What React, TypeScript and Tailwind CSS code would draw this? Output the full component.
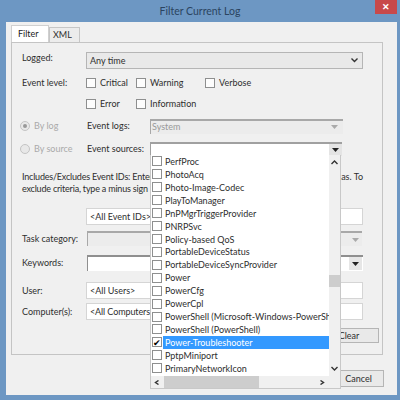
import React from "react";

const items = ["PerfProc","PhotoAcq","Photo-Image-Codec","PlayToManager","PnPMgrTriggerProvider","PNRPSvc","Policy-based QoS","PortableDeviceStatus","PortableDeviceSyncProvider","Power","PowerCfg","PowerCpl","PowerShell (Microsoft-Windows-PowerShell)","PowerShell (PowerShell)","Power-Troubleshooter","PptpMiniport","PrimaryNetworkIcon"];

function Check({ label, className = "" }: { label: string; className?: string }) {
  return (
    <div className={"flex items-center gap-[4px] " + className}>
      <span className="w-[10px] h-[10px] border border-[#8e8f8f] bg-[#fdfdfd] shrink-0" />
      <span>{label}</span>
    </div>
  );
}

function Arrow({ color = "#222" }: { color?: string }) {
  return (
    <svg width="7" height="4" viewBox="0 0 7 4"><path d="M0 0H7L3.5 4Z" fill={color} /></svg>
  );
}

function Chev({ d }: { d: string }) {
  return (
    <svg width="7" height="5" viewBox="0 0 7 5"><path d={d} fill="none" stroke="#333" strokeWidth="1.4" /></svg>
  );
}

function Field({ text, className = "" }: { text?: string; className?: string }) {
  return (
    <div className={"flex items-center bg-white border border-[#d5d5d5] pl-[3px] whitespace-nowrap " + className}>{text}</div>
  );
}

export default function App() {
  return (
    <div className="relative w-[400px] h-[400px] overflow-hidden bg-[#6d97c3] text-[#2e2e2e] text-[9px] leading-[12px] pt-[22px] pl-[6px] pr-[3px] pb-[5px]" style={{ fontFamily: 'Lato, sans-serif' }}>
      <div className="absolute left-0 right-0 top-[3px] text-center text-[10.5px] leading-[16px] text-[#2b4460]">Filter Current Log</div>
      <div className="absolute right-[3px] top-0 w-[22px] h-[14px] bg-[#c8494a] flex items-center justify-center text-white text-[9px] font-bold">✕</div>

      <div className="h-[373px] bg-[#f0f0f0] pt-[4px] pl-[5px] relative">
        <div className="flex items-end h-[16px]">
          <div className="w-[38px] h-[17px] bg-white border border-[#d0d0d0] border-b-0 flex items-center pl-[6px] text-[#222]">Filter</div>
          <div className="w-[31px] h-[15px] bg-[#ececec] border border-[#c6c6c6] border-b-0 flex items-center pl-[3px]">XML</div>
        </div>

        <div className="w-[372px] h-[313px] border border-[#c4c4c4] bg-[#f0f0f0] pl-[10px] pt-[9px]">
          <div className="flex h-[17px]">
            <div className="w-[64px]">Logged:</div>
            <div className="w-[277px] h-[17px] border border-[#b5b5b5] bg-[#e9e9e9] flex items-center justify-between pl-[3px] pr-[4px]">
              <span>Any time</span>
              <Chev d="M0.5 0.5L3.5 3.5L6.5 0.5" />
            </div>
          </div>

          <div className="flex mt-[8px] h-[12px]">
            <div className="w-[64px]">Event level:</div>
            <Check label="Critical" className="w-[50px]" />
            <Check label="Warning" className="w-[69px]" />
            <Check label="Verbose" />
          </div>
          <div className="flex mt-[9px] h-[12px] pl-[64px]">
            <Check label="Error" className="w-[50px]" />
            <Check label="Information" />
          </div>

          <div className="flex mt-[9px] h-[14px] items-center">
            <div className="w-[65px] flex items-center gap-[4px] text-[#aaa]">
              <span className="w-[10px] h-[10px] rounded-full border border-[#c4c4c4] bg-[#e8e8e8] flex items-center justify-center -ml-[2px]"><span className="w-[4px] h-[4px] rounded-full bg-[#999]" /></span>
              By log
            </div>
            <div className="w-[63px] whitespace-nowrap">Event logs:</div>
            <div className="w-[193px] h-[15px] border-t-2 border-l border-[#a8a8a8] bg-[#ececec] flex items-center justify-between pl-[1px] text-[#999] pr-[5px]">
              System
              <Arrow color="#aaa" />
            </div>
          </div>

          <div className="flex mt-[9px] h-[14px] items-center">
            <div className="w-[65px] flex items-center gap-[4px] text-[#aaa]">
              <span className="w-[10px] h-[10px] rounded-full border border-[#c4c4c4] bg-[#e8e8e8] -ml-[2px]" />
              By source
            </div>
            <div className="w-[63px] whitespace-nowrap">Event sources:</div>
            <div className="w-[192px] h-[14px] border-t-2 border-l border-[#a0a0a0] bg-white flex items-center justify-end">
              <span className="w-[13px] h-[12px] bg-[#e4e4e4] flex items-center justify-center"><Arrow /></span>
            </div>
          </div>

          <div className="mt-[15px] flex justify-between w-[341px] whitespace-nowrap">
            <span className="tracking-[-0.2px]">Includes/Excludes Event IDs: Enter</span>
            <span>as. To</span>
          </div>
          <div className="whitespace-nowrap tracking-[-0.2px]">exclude criteria, type a minus sign</div>

          <div className="flex mt-[13px] h-[17px]">
            <div className="w-[64px]" />
            <Field text="<All Event IDs>" className="w-[277px]" />
          </div>

          <div className="flex mt-[6px] h-[15px] items-center">
            <div className="w-[65px]">Task category:</div>
            <div className="w-[275px] h-[15px] border-t-2 border-l border-[#a8a8a8] bg-[#ececec] flex items-center justify-end pr-[3px]"><Arrow color="#aaa" /></div>
          </div>

          <div className="flex mt-[8px] h-[17px] items-center">
            <div className="w-[65px]">Keywords:</div>
            <div className="w-[276px] h-[16px] border-t-2 border-l border-[#8f8f8f] bg-white flex items-center justify-end pr-[1px]">
              <span className="w-[13px] h-[13px] bg-[#e6e6e6] flex items-center justify-center"><Arrow /></span>
            </div>
          </div>

          <div className="flex mt-[11px] h-[17px] items-center">
            <div className="w-[64px]">User:</div>
            <Field text="<All Users>" className="w-[277px] h-[17px]" />
          </div>

          <div className="flex mt-[4px] h-[17px] items-center">
            <div className="w-[64px]">Computer(s):</div>
            <Field text="<All Computers" className="w-[277px] h-[17px] tracking-[-0.1px]" />
          </div>

          <div className="flex justify-end mt-[8px] pr-[3px]">
            <div className="w-[60px] h-[15px] border border-[#b5b5b5] bg-[#e9e9e9] flex items-center justify-center">Clear</div>
          </div>
        </div>

        <div className="flex justify-end pr-[13px] mt-[15px]">
          <div className="w-[51px] h-[17px] border border-[#b5b5b5] bg-[#e9e9e9] flex items-center justify-center">Cancel</div>
        </div>
      </div>

      <div className="absolute left-[150px] top-[155px] w-[191px] h-[234px] bg-white border-x border-b border-[#c8c8c8] flex">
        <div className="flex-1 min-w-0 flex flex-col">
          <div className="flex-1 overflow-hidden">
            {items.map((t, i) => (
              <div key={t} className="h-[12.93px] flex items-center whitespace-nowrap pl-[1px] text-[#2e2e2e]">
                <span className="w-[10px] h-[10px] border border-[#8e8f8f] bg-white shrink-0 flex items-center justify-center text-[9px] leading-none text-black">{i === 14 ? "✔" : ""}</span>
                <span className={"ml-[1px] pl-[2px] flex-1 leading-[13px] overflow-hidden " + (i === 14 ? "bg-[#3399ff] text-white" : "")}>{t}</span>
              </div>
            ))}
          </div>
          <div className="h-[12px] bg-[#f0f0f0] flex items-center pl-[3px] pr-[4px] justify-between">
            <Chev d="M4.5 0.5L1.5 2.5L4.5 4.5" />
            <span className="absolute left-[13px] w-[95px] h-[12px] bg-[#cdcdcd]" />
            <Chev d="M2.5 0.5L5.5 2.5L2.5 4.5" />
          </div>
        </div>
        <div className="w-[11px] bg-[#f0f0f0] flex flex-col items-center justify-between pt-[5px] pb-[17px] relative">
          <Chev d="M0.5 4L3.5 1L6.5 4" />
          <span className="absolute top-[120px] w-[11px] h-[12px] bg-[#cdcdcd]" />
          <Chev d="M0.5 1L3.5 4L6.5 1" />
        </div>
      </div>
    </div>
  );
}
